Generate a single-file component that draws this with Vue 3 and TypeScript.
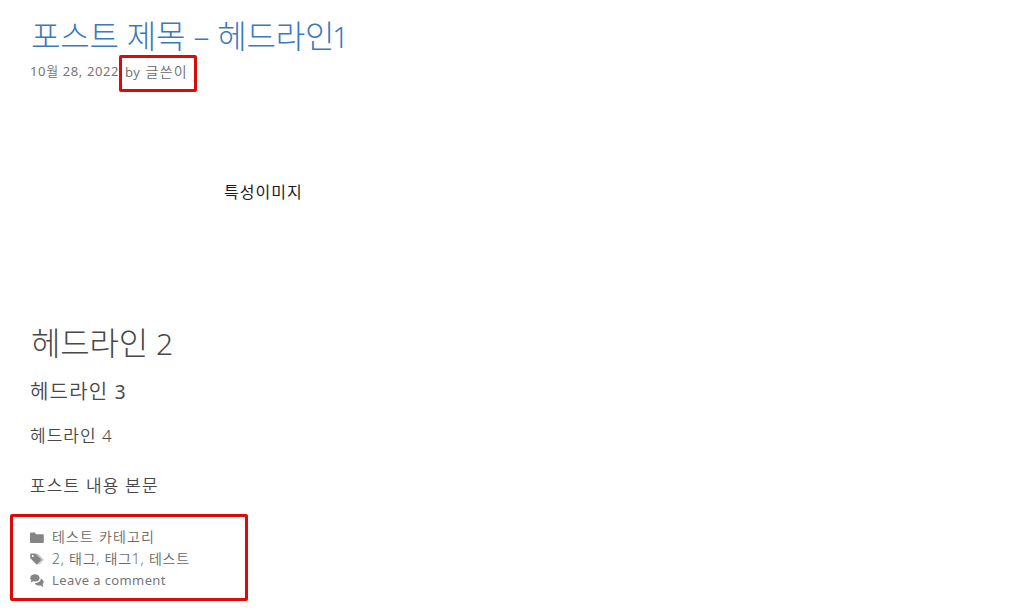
<script setup lang="ts">
const categories: string = '테스트 카테고리'
const tags: string[] = ['2', '태그', '태그1', '테스트']
</script>

<template>
  <article class="post">
    <header>
      <h1>포스트 제목 – 헤드라인<span class="num">1</span></h1>
      <div class="meta">
        <span class="date">10<span class="ko">월</span> 28, 2022</span>
        <span class="author">by <span class="name">글쓴이</span></span>
      </div>
    </header>
    <figure class="featured">특성이미지</figure>
    <div class="content">
      <h2>헤드라인 <span class="num">2</span></h2>
      <h3>헤드라인 <span class="digit">3</span></h3>
      <h4>헤드라인 4</h4>
      <p>포스트 내용 본문</p>
    </div>
    <footer>
      <div class="row">
        <svg viewBox="0 0 14 14"><path d="M0 2.5Q0 1.5 1 1.5H4.6Q5.6 1.5 5.6 2.5V3.2H12.8Q13.8 3.2 13.8 4.2V11Q13.8 12 12.8 12H1Q0 12 0 11Z" /></svg>
        <span class="cat">{{ categories }}</span>
      </div>
      <div class="row">
        <svg viewBox="0 0 14 14"><path class="back" d="M6 1.5H7.5L13.3 7.2Q13.8 7.8 13.3 8.4L9.3 12.5L8.5 12L12 8Z" /><path d="M.2 2.2Q.2 1.4 1 1.4H5Q5.6 1.4 6.1 1.9L11.2 7.2Q11.8 7.8 11.2 8.4L7.5 12.3Q6.9 12.9 6.3 12.3L.8 6.8Q.2 6.3 .2 5.6ZM2.8 3A1 1 0 1 0 2.8 5A1 1 0 1 0 2.8 3Z" fill-rule="evenodd" /></svg>
        <span class="tags">{{ tags.join(', ') }}</span>
      </div>
      <div class="row">
        <svg viewBox="0 0 14 14"><path d="M5 .2C7.6 .2 9.6 1.7 9.6 3.9S7.6 7.5 5 7.5Q4 7.5 3.2 7.2Q2 8.2 .4 8.3Q1.2 7.4 1.3 6.3Q.2 5.3 .2 3.9C.2 1.7 2.4 .2 5 .2Z" /><path d="M10.7 4.5Q13.7 5.6 13.7 8Q13.7 9.3 12.6 10.3Q12.8 11.6 13.6 12.7Q12 12.7 10.6 11.4C8 12 5.4 11 4.7 9C8.5 9 10.9 7.3 10.7 4.5Z" /></svg>
        <span class="comment">Leave a comment</span>
      </div>
    </footer>
    <i class="mark mark-author"></i>
    <i class="mark mark-footer"></i>
  </article>
</template>

<style>
body {
  margin: 0;
  background: #fff;
}
</style>

<style scoped>
.post {
  position: relative;
  box-sizing: border-box;
  width: 1026px;
  height: 608px;
  overflow: hidden;
  padding: 15px 30px 0;
  font-family: "Noto Sans", "Noto Sans CJK KR", sans-serif;
  font-weight: 350;
  color: #484848;
  white-space: nowrap;
}
h1, h2, h3, h4, p, figure {
  margin: 0;
  font-weight: 350;
}
h1, h2 {
  font-weight: 300;
}
h1 {
  height: 42px;
  line-height: 42px;
  font-size: 32px;
  letter-spacing: -0.2px;
  padding-left: 1px;
  color: #3a79bb;
}
.num {
  font-size: 30px;
}
h1 .num {
  margin-left: -2px;
  font-size: 29px;
}
.meta {
  display: flex;
  height: 29px;
  line-height: 29px;
  font-size: 13px;
  font-weight: 400;
  color: #767676;
}
.date {
  width: 95px;
  letter-spacing: 0.62px;
}
.ko {
  font-weight: 350;
}
.author {
  letter-spacing: 0.6px;
}
.name {
  margin-left: 1px;
  font-size: 14px;
  font-weight: 350;
  letter-spacing: 1.2px;
  color: #686868;
}
.featured {
  height: 40px;
  margin-top: 86px;
  padding-left: 194px;
  line-height: 40px;
  font-size: 16px;
  font-weight: 400;
  letter-spacing: 1px;
  color: #1c1c1c;
}
.content {
  margin-top: 111px;
}
h2 {
  height: 40px;
  padding-left: 1px;
  line-height: 40px;
  font-size: 32px;
  letter-spacing: -0.2px;
}
h3 {
  height: 30px;
  margin-top: 14px;
  line-height: 30px;
  font-size: 20px;
  letter-spacing: 1.2px;
}
.digit {
  font-size: 19px;
  font-weight: 400;
}
h4 {
  height: 30px;
  margin-top: 14px;
  line-height: 30px;
  font-size: 17px;
  letter-spacing: 1px;
}
p {
  height: 30px;
  margin-top: 20px;
  line-height: 30px;
  font-size: 17px;
  letter-spacing: 1.15px;
}
footer {
  margin-top: 26px;
  font-size: 14px;
  color: #686868;
}
.row {
  display: flex;
  align-items: center;
  height: 21.5px;
  line-height: 21px;
}
.row svg {
  width: 14px;
  height: 14px;
  margin-right: 8px;
  fill: #858585;
}
.back {
  opacity: 0.5;
}
.cat {
  margin-top: -2px;
  letter-spacing: 1.15px;
}
.tags {
  margin-top: -2px;
  letter-spacing: 0.75px;
}
.comment {
  font-size: 13px;
  font-weight: 400;
  letter-spacing: 0.4px;
  color: #767676;
}
.mark {
  position: absolute;
  box-sizing: border-box;
  border: 3px solid #dc0a0a;
  border-radius: 2px;
}
.mark-author {
  left: 119px;
  top: 55px;
  width: 78px;
  height: 37px;
}
.mark-footer {
  left: 10px;
  top: 514px;
  width: 238px;
  height: 87px;
}
</style>
